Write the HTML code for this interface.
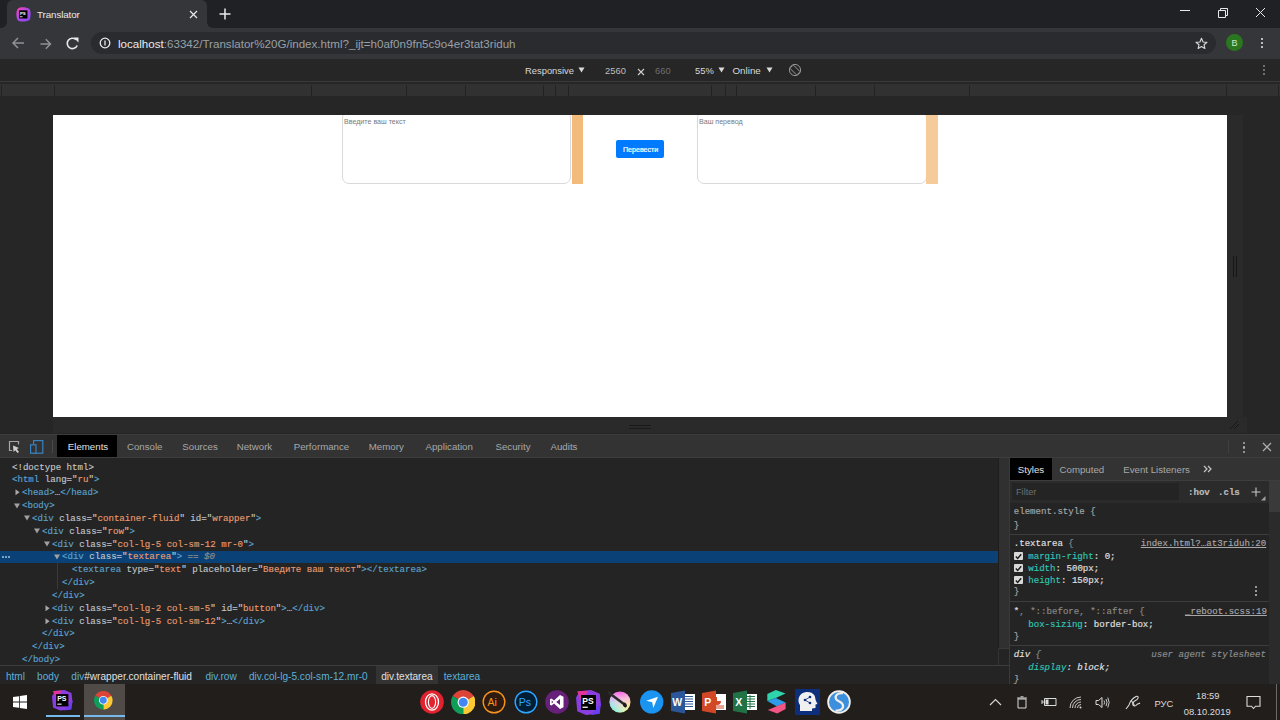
<!DOCTYPE html>
<html><head><meta charset="utf-8">
<style>
*{margin:0;padding:0;box-sizing:border-box}
html,body{width:1280px;height:720px;overflow:hidden;background:#262626;font-family:"Liberation Sans",sans-serif}
.a{position:absolute}
.mono{font-family:"Liberation Mono",monospace;-webkit-text-stroke:0.15px}
#tabstrip{left:0;top:0;width:1280px;height:28px;background:#202124}
#toolbar{left:0;top:28px;width:1280px;height:31px;background:#35363a}
#devbar{left:0;top:59px;width:1280px;height:23px;background:#262626;border-bottom:1px solid #3a3a3a}
#mq{left:0;top:84px;width:1280px;height:12px;background:#313131}
#page{left:53px;top:115px;width:1174px;height:302px;background:#fff;overflow:hidden}
#dt{left:0;top:434px;width:1280px;height:251px;background:#242424;border-top:1px solid #3d3d3d}
#taskbar{left:0;top:685px;width:1280px;height:35px;background:#1f1a18}
.t{position:absolute;white-space:pre}
</style></head><body>
<div id="tabstrip" class="a">
 <div class="a" style="left:7px;top:0;width:200px;height:28px;background:#35363a;border-radius:6px 6px 0 0"></div>
 <div class="a" style="left:1px;top:20px;width:6px;height:8px;background:#35363a"></div>
 <div class="a" style="left:-5px;top:14px;width:12px;height:14px;background:#202124;border-radius:0 0 6px 0"></div>
 <div class="a" style="left:207px;top:20px;width:6px;height:8px;background:#35363a"></div>
 <div class="a" style="left:207px;top:14px;width:12px;height:14px;background:#202124;border-radius:0 0 0 6px"></div>
 <svg class="a" style="left:16px;top:6.5px" width="15" height="15" viewBox="0 0 15 15"><defs><linearGradient id="fg" x1="0" y1="0" x2="1" y2="1"><stop offset="0" stop-color="#ff3fa4"/><stop offset="0.45" stop-color="#b446e8"/><stop offset="1" stop-color="#7b4cf0"/></linearGradient></defs><path d="M4 0.5C7 0 11 0.3 13.5 2C15 4 14.8 10 13.8 12.5C12 14.6 7 14.8 3.5 14.3C1 13.5 0.3 10 0.4 6.5C0.5 3 1.5 1 4 0.5Z" fill="url(#fg)"/><rect x="3.2" y="3.3" width="8.2" height="8.2" fill="#000"/><text x="3.9" y="7.6" font-size="4.4" font-weight="bold" fill="#fff" font-family="Liberation Sans">PS</text><rect x="4" y="9.4" width="2.6" height="0.8" fill="#fff"/></svg>
 <div class="t" style="left:37px;top:9px;font-size:9.8px;color:#e8eaed;letter-spacing:-0.1px">Translator</div>
 <svg class="a" style="left:189px;top:10px" width="9" height="9" viewBox="0 0 9 9"><path d="M1 1L8 8M8 1L1 8" stroke="#e8eaed" stroke-width="1.2"/></svg>
 <svg class="a" style="left:219px;top:8px" width="12" height="12" viewBox="0 0 12 12"><path d="M6 0.5V11.5M0.5 6H11.5" stroke="#e8eaed" stroke-width="1.5"/></svg>
 <svg class="a" style="left:1179px;top:9px" width="12" height="4" viewBox="0 0 12 4"><path d="M1 1.5H11" stroke="#e8eaed" stroke-width="1"/></svg>
 <svg class="a" style="left:1217px;top:7px" width="12" height="12" viewBox="0 0 12 12"><path d="M1.5 3.5H8.5V10.5H1.5Z" fill="none" stroke="#e8eaed" stroke-width="1"/><path d="M3.5 3.5V1.5H10.5V8.5H8.5" fill="none" stroke="#e8eaed" stroke-width="1"/></svg>
 <svg class="a" style="left:1255px;top:7px" width="11" height="11" viewBox="0 0 11 11"><path d="M1 1L10 10M10 1L1 10" stroke="#e8eaed" stroke-width="1"/></svg>
</div>
<div id="toolbar" class="a">
 <svg class="a" style="left:11px;top:8px" width="14" height="14" viewBox="0 0 14 14"><path d="M13 7H2M7 2L2 7L7 12" fill="none" stroke="#8e9196" stroke-width="1.5"/></svg>
 <svg class="a" style="left:38.5px;top:8.5px" width="14" height="14" viewBox="0 0 14 14"><path d="M1.5 7H11.5M6.8 2.3L11.5 7L6.8 11.7" fill="none" stroke="#8e9196" stroke-width="1.5"/></svg>
 <svg class="a" style="left:64.5px;top:8px" width="15" height="15" viewBox="0 0 15 15"><path d="M12.2 9.5A5.2 5.2 0 1 1 11 3.6" fill="none" stroke="#e8eaed" stroke-width="1.6"/><path d="M8.5 1.5H13.5V6.5Z" fill="#e8eaed"/></svg>
 <div class="a" style="left:90.5px;top:3.6px;width:1125.5px;height:22.6px;background:#292b2e;border-radius:11px"></div>
 <svg class="a" style="left:98.8px;top:8.8px" width="12" height="12" viewBox="0 0 12 12"><circle cx="6" cy="6" r="4.8" fill="none" stroke="#e8eaed" stroke-width="1.3"/><path d="M6 3.5V8.5" stroke="#e8eaed" stroke-width="1.3"/></svg>
 <div class="t" style="left:118px;top:9px;font-size:11.6px;color:#9aa0a6"><span style="color:#e8eaed">localhost</span>:63342/Translator%20G/index.html?_ijt=h0af0n9fn5c9o4er3tat3riduh</div>
 <svg class="a" style="left:1195px;top:8.5px" width="13" height="13" viewBox="0 0 15 14"><path d="M7.5 1L9.3 5.2L13.8 5.5L10.4 8.4L11.4 12.8L7.5 10.5L3.6 12.8L4.6 8.4L1.2 5.5L5.7 5.2Z" fill="none" stroke="#d8d8d8" stroke-width="1.3" stroke-linejoin="round"/></svg>
 <div class="a" style="left:1226px;top:6px;width:17px;height:17px;background:#2b7620;border-radius:50%"></div>
 <div class="t" style="left:1230.5px;top:9.5px;font-size:9px;color:#cfe8c8;width:8px;text-align:center">B</div>
 <div class="a" style="left:1260.5px;top:9.5px;width:2.6px;height:2.6px;background:#e8eaed;border-radius:50%"></div>
 <div class="a" style="left:1260.5px;top:13.7px;width:2.6px;height:2.6px;background:#e8eaed;border-radius:50%"></div>
 <div class="a" style="left:1260.5px;top:17.9px;width:2.6px;height:2.6px;background:#e8eaed;border-radius:50%"></div>
</div>
<div id="devbar" class="a">
 <div class="t" style="left:525px;top:5.5px;font-size:9.4px;color:#d9d9d9">Responsive</div>
 <svg class="a" style="left:578px;top:8px" width="7" height="6" viewBox="0 0 7 6"><path d="M0.5 0.5H6.5L3.5 5.5Z" fill="#d9d9d9"/></svg>
 <div class="t" style="left:605px;top:5.5px;font-size:9.4px;color:#bdbdbd">2560</div>
 <svg class="a" style="left:637px;top:9px" width="8" height="8" viewBox="0 0 8 8"><path d="M1 1L7 7M7 1L1 7" stroke="#cfcfcf" stroke-width="1.1"/></svg>
 <div class="t" style="left:655px;top:5.5px;font-size:9.4px;color:#6e6e6e">660</div>
 <div class="t" style="left:695px;top:5.5px;font-size:9.4px;color:#d9d9d9">55%</div>
 <svg class="a" style="left:718px;top:8px" width="7" height="6" viewBox="0 0 7 6"><path d="M0.5 0.5H6.5L3.5 5.5Z" fill="#d9d9d9"/></svg>
 <div class="t" style="left:732.5px;top:5.5px;font-size:9.8px;color:#d9d9d9">Online</div>
 <svg class="a" style="left:765.5px;top:8px" width="7" height="6" viewBox="0 0 7 6"><path d="M0.5 0.5H6.5L3.5 5.5Z" fill="#d9d9d9"/></svg>
 <svg class="a" style="left:788px;top:4px" width="14" height="14" viewBox="0 0 14 14"><circle cx="7" cy="7" r="5.6" fill="none" stroke="#a0a0a0" stroke-width="0.9"/><rect x="4.6" y="2.2" width="4.8" height="9.6" rx="0.6" transform="rotate(-45 7 7)" fill="#262626" stroke="#a0a0a0" stroke-width="0.9"/></svg>
 <div class="a" style="left:1263px;top:6px;width:2px;height:2px;background:#8a8a8a;border-radius:50%"></div>
 <div class="a" style="left:1263px;top:10px;width:2px;height:2px;background:#8a8a8a;border-radius:50%"></div>
 <div class="a" style="left:1263px;top:14px;width:2px;height:2px;background:#8a8a8a;border-radius:50%"></div>
</div>
<div id="mq" class="a"><div class="a" style="left:1.0px;top:1px;width:1px;height:11px;background:#222"></div><div class="a" style="left:53.5px;top:1px;width:1px;height:11px;background:#222"></div><div class="a" style="left:310.5px;top:1px;width:1px;height:11px;background:#222"></div><div class="a" style="left:405.5px;top:1px;width:1px;height:11px;background:#222"></div><div class="a" style="left:464.5px;top:1px;width:1px;height:11px;background:#222"></div><div class="a" style="left:543.0px;top:1px;width:1px;height:11px;background:#222"></div><div class="a" style="left:554.5px;top:1px;width:1px;height:11px;background:#222"></div><div class="a" style="left:568.0px;top:1px;width:1px;height:11px;background:#222"></div><div class="a" style="left:711.0px;top:1px;width:1px;height:11px;background:#222"></div><div class="a" style="left:724.5px;top:1px;width:1px;height:11px;background:#222"></div><div class="a" style="left:736.0px;top:1px;width:1px;height:11px;background:#222"></div><div class="a" style="left:814.5px;top:1px;width:1px;height:11px;background:#222"></div><div class="a" style="left:873.5px;top:1px;width:1px;height:11px;background:#222"></div><div class="a" style="left:968.5px;top:1px;width:1px;height:11px;background:#222"></div><div class="a" style="left:1225.5px;top:1px;width:1px;height:11px;background:#222"></div><div class="a" style="left:1278.0px;top:1px;width:1px;height:11px;background:#222"></div></div>
<div class="a" style="left:1227px;top:115px;width:16px;height:302px;background:#2a2a2a"></div>
<div class="a" style="left:1233px;top:256px;width:1px;height:21px;background:#161616"></div>
<div class="a" style="left:1236px;top:256px;width:1px;height:21px;background:#161616"></div>
<div class="a" style="left:53px;top:417px;width:1194px;height:16px;background:#2a2a2a"></div>
<div class="a" style="left:629px;top:425px;width:22px;height:1px;background:#1a1a1a"></div>
<div class="a" style="left:629px;top:428px;width:22px;height:1px;background:#1a1a1a"></div>
<svg class="a" style="left:1228px;top:418px" width="14" height="14" viewBox="0 0 14 14"><path d="M2 11L10 3M6 11L11 6" stroke="#151515" stroke-width="1"/></svg>
<div id="page" class="a">
 <div class="a" style="left:289px;top:-4px;width:229px;height:72.5px;border:1px solid #d9d9d9;border-radius:7px"></div>
 <div class="t" style="left:291px;top:3px;font-size:7.1px;color:#7a7a7a">Введите ваш текст</div>
 <div class="a" style="left:519px;top:0;width:11px;height:68.5px;background:#f2bb7b"></div>
 <div class="a" style="left:563px;top:25px;width:47.6px;height:17.5px;background:#007bff;border-radius:2px"></div>
 <div class="t" style="left:570px;top:30.6px;font-size:7.1px;color:#fff;-webkit-text-stroke:0.2px #fff">Перевести</div>
 <div class="a" style="left:644px;top:-4px;width:229.5px;height:72.5px;border:1px solid #d9d9d9;border-radius:7px"></div>
 <div class="t" style="left:646px;top:3px;font-size:7.1px;color:#7a7a7a">Ваш перевод</div>
 <div class="a" style="left:873px;top:0;width:11.5px;height:68.5px;background:#f4cb99"></div>
</div>
<!--DT-->
<div class="a" style="left:0;top:433px;width:1280px;height:252px;background:#242424"></div>
<div class="a" style="left:0;top:434px;width:1280px;height:1px;background:#3d3d3d"></div>
<div class="a" style="left:0;top:435px;width:1280px;height:22px;background:#333333"></div>
<div class="a" style="left:0;top:457px;width:1280px;height:1px;background:#3d3d3d"></div>
<svg class="a" style="left:7px;top:440px" width="14" height="14" viewBox="0 0 14 14"><path d="M5 10.5H2.5V1.5H11.5V4.5" fill="none" stroke="#a5a5a5" stroke-width="1.2"/><path d="M6 5.5L6.5 12L8.2 10.2L10.5 13L12 12L9.8 9L12 8Z" fill="#cfcfcf"/></svg>
<svg class="a" style="left:29px;top:439px" width="16" height="16" viewBox="0 0 16 16"><rect x="4.6" y="1.6" width="9.2" height="12.6" fill="none" stroke="#3a88cc" stroke-width="1.1"/><rect x="1.6" y="5.8" width="5.4" height="8.4" fill="#333" stroke="#3a88cc" stroke-width="1.1"/></svg>
<div class="a" style="left:52px;top:440px;width:1px;height:13px;background:#4a4a4a"></div>
<div class="a" style="left:57px;top:435px;width:60px;height:22px;background:#000"></div>
<div class="t" style="left:67.8px;top:441px;font-size:9.7px;color:#e0e0e0">Elements</div>
<div class="t" style="left:126.9px;top:441px;font-size:9.7px;color:#a8a8a8">Console</div>
<div class="t" style="left:182.3px;top:441px;font-size:9.7px;color:#a8a8a8">Sources</div>
<div class="t" style="left:236.7px;top:441px;font-size:9.7px;color:#a8a8a8">Network</div>
<div class="t" style="left:293.75px;top:441px;font-size:9.7px;color:#a8a8a8">Performance</div>
<div class="t" style="left:368.75px;top:441px;font-size:9.7px;color:#a8a8a8">Memory</div>
<div class="t" style="left:425.5px;top:441px;font-size:9.7px;color:#a8a8a8">Application</div>
<div class="t" style="left:495.5px;top:441px;font-size:9.7px;color:#a8a8a8">Security</div>
<div class="t" style="left:550.5px;top:441px;font-size:9.7px;color:#a8a8a8">Audits</div>
<div class="a" style="left:1228px;top:440px;width:1px;height:13px;background:#3f3f3f"></div>
<div class="a" style="left:1243px;top:442.2px;width:2.2px;height:2.2px;background:#b0b0b0;border-radius:50%"></div>
<div class="a" style="left:1243px;top:446.4px;width:2.2px;height:2.2px;background:#b0b0b0;border-radius:50%"></div>
<div class="a" style="left:1243px;top:450.6px;width:2.2px;height:2.2px;background:#b0b0b0;border-radius:50%"></div>
<svg class="a" style="left:1262px;top:442px" width="10" height="10" viewBox="0 0 10 10"><path d="M1 1L9 9M9 1L1 9" stroke="#b0b0b0" stroke-width="1.2"/></svg>
<div class="a" style="left:998px;top:458px;width:12px;height:207px;border-left:1px solid #333;border-right:1px solid #3a3a3a"></div>
<div class="a" style="left:998px;top:458px;width:12px;height:191px;background:#303030;border-left:1px solid #1e1e1e;border-right:1px solid #3a3a3a;border-bottom:1px solid #3a3a3a"></div>
<div class="a" style="left:1009px;top:458px;width:1px;height:227px;background:#3a3a3a"></div>
<div class="a" style="left:1010px;top:458px;width:270px;height:22px;background:#333333"></div>
<div class="a" style="left:1010px;top:480px;width:270px;height:1px;background:#3d3d3d"></div>
<div class="a" style="left:1010px;top:458px;width:42px;height:22px;background:#000"></div>
<div class="t" style="left:1017.8px;top:464px;font-size:9.7px;color:#e0e0e0">Styles</div>
<div class="t" style="left:1059.5px;top:464px;font-size:9.7px;color:#a8a8a8">Computed</div>
<div class="t" style="left:1123.2px;top:464px;font-size:9.7px;color:#a8a8a8">Event Listeners</div>
<svg class="a" style="left:1203px;top:465px" width="10" height="8" viewBox="0 0 10 8"><path d="M1 1L4 4L1 7M5 1L8 4L5 7" fill="none" stroke="#c8c8c8" stroke-width="1.2"/></svg>
<div class="a" style="left:1010px;top:481px;width:259px;height:22px;background:#2b2b2b"></div>
<div class="a" style="left:1012px;top:483px;width:166.5px;height:17px;background:#242424"></div>
<div class="t" style="left:1016px;top:487px;font-size:9.2px;color:#6f6f6f">Filter</div>
<div class="t mono" style="left:1188px;top:486.5px;font-size:9.1px;font-weight:bold;color:#bdbdbd">:hov</div>
<div class="t mono" style="left:1218px;top:486.5px;font-size:9.1px;font-weight:bold;color:#bdbdbd">.cls</div>
<svg class="a" style="left:1251px;top:487px" width="10" height="10" viewBox="0 0 10 10"><path d="M5 0.5V9.5M0.5 5H9.5" stroke="#c8c8c8" stroke-width="1.1"/></svg>
<svg class="a" style="left:1261px;top:496px" width="4.5" height="4.5" viewBox="0 0 5 5"><path d="M5 0V5H0Z" fill="#a0a0a0"/></svg>
<div class="a" style="left:1269px;top:481px;width:11px;height:204px;background:#2b2b2b"></div>
<div class="a" style="left:1269px;top:481px;width:11px;height:31px;background:#3a3a3a"></div>
<div class="t mono" style="left:1013.75px;top:506.25px;font-size:9.1px;line-height:12px;"><span style="color:#a8a8a8">element.style {</span></div>
<div class="t mono" style="left:1013.75px;top:520.00px;font-size:9.1px;line-height:12px;"><span style="color:#a8a8a8">}</span></div>
<div class="a" style="left:1010px;top:534px;width:259px;height:1px;background:#3d3d3d"></div>
<div class="t mono" style="left:1013.75px;top:537.50px;font-size:9.1px;line-height:12px;"><span style="color:#e0e0e0">.textarea</span><span style="color:#8a8a8a"> {</span></div>
<div class="t mono" style="left:1140.75px;top:537.50px;font-size:9.1px;line-height:12px;"><span style="color:#a8a8a8;text-decoration:underline">index.html?…at3riduh:20</span></div>
<div class="a" style="left:1014px;top:551.5px;width:8.5px;height:8.5px;background:#d8d8d8;border-radius:1px"></div>
<svg class="a" style="left:1014px;top:551.5px" width="9" height="9" viewBox="0 0 9 9"><path d="M1.8 4.5L3.7 6.5L7.2 2.2" fill="none" stroke="#1a1a1a" stroke-width="1.4"/></svg>
<div class="t mono" style="left:1028.25px;top:551.00px;font-size:9.1px;line-height:12px;"><span style="color:#30c7b6">margin-right</span><span style="color:#e0e0e0">: 0;</span></div>
<div class="a" style="left:1014px;top:563.5px;width:8.5px;height:8.5px;background:#d8d8d8;border-radius:1px"></div>
<svg class="a" style="left:1014px;top:563.5px" width="9" height="9" viewBox="0 0 9 9"><path d="M1.8 4.5L3.7 6.5L7.2 2.2" fill="none" stroke="#1a1a1a" stroke-width="1.4"/></svg>
<div class="t mono" style="left:1028.25px;top:563.00px;font-size:9.1px;line-height:12px;"><span style="color:#30c7b6">width</span><span style="color:#e0e0e0">: 500px;</span></div>
<div class="a" style="left:1014px;top:575.5px;width:8.5px;height:8.5px;background:#d8d8d8;border-radius:1px"></div>
<svg class="a" style="left:1014px;top:575.5px" width="9" height="9" viewBox="0 0 9 9"><path d="M1.8 4.5L3.7 6.5L7.2 2.2" fill="none" stroke="#1a1a1a" stroke-width="1.4"/></svg>
<div class="t mono" style="left:1028.25px;top:575.00px;font-size:9.1px;line-height:12px;"><span style="color:#30c7b6">height</span><span style="color:#e0e0e0">: 150px;</span></div>
<div class="t mono" style="left:1013.75px;top:586.25px;font-size:9.1px;line-height:12px;"><span style="color:#a8a8a8">}</span></div>
<div class="a" style="left:1255px;top:586px;width:2px;height:2px;background:#c0c0c0;border-radius:50%"></div>
<div class="a" style="left:1255px;top:590px;width:2px;height:2px;background:#c0c0c0;border-radius:50%"></div>
<div class="a" style="left:1255px;top:594px;width:2px;height:2px;background:#c0c0c0;border-radius:50%"></div>
<div class="a" style="left:1010px;top:601px;width:259px;height:1px;background:#3d3d3d"></div>
<div class="t mono" style="left:1013.75px;top:605.50px;font-size:9.1px;line-height:12px;"><span style="color:#e0e0e0">*</span><span style="color:#8a8a8a">, *::before, *::after</span><span style="color:#8a8a8a"> {</span></div>
<div class="t mono" style="left:1185px;top:605.50px;font-size:9.1px;line-height:12px;"><span style="color:#a8a8a8;text-decoration:underline">_reboot.scss:19</span></div>
<div class="t mono" style="left:1028.25px;top:618.75px;font-size:9.1px;line-height:12px;"><span style="color:#30c7b6">box-sizing</span><span style="color:#e0e0e0">: border-box;</span></div>
<div class="t mono" style="left:1013.75px;top:631.25px;font-size:9.1px;line-height:12px;"><span style="color:#a8a8a8">}</span></div>
<div class="a" style="left:1010px;top:645px;width:259px;height:1px;background:#3d3d3d"></div>
<div class="t mono" style="left:1013.75px;top:648.75px;font-size:9.1px;line-height:12px;font-style:italic"><span style="color:#e0e0e0">div</span><span style="color:#8a8a8a"> {</span></div>
<div class="t mono" style="left:1151.25px;top:648.75px;font-size:9.1px;line-height:12px;font-style:italic"><span style="color:#8f8f8f">user agent stylesheet</span></div>
<div class="t mono" style="left:1028.25px;top:662.00px;font-size:9.1px;line-height:12px;font-style:italic"><span style="color:#30c7b6">display</span><span style="color:#e0e0e0">: block;</span></div>
<div class="t mono" style="left:1013.75px;top:673.75px;font-size:9.1px;line-height:12px;font-style:italic"><span style="color:#a8a8a8">}</span></div>
<div class="a" style="left:0;top:665px;width:1010px;height:1px;background:#3d3d3d"></div>
<div class="a" style="left:375.5px;top:666px;width:62px;height:17.5px;background:#333333"></div>
<div class="t" style="left:5.9px;top:670.5px;font-size:10.1px"><span style="color:#5db0d7">html</span></div>
<div class="t" style="left:37.1px;top:670.5px;font-size:10.1px"><span style="color:#5db0d7">body</span></div>
<div class="t" style="left:71.3px;top:670.5px;font-size:10.1px"><span style="color:#5db0d7">div</span><span style="color:#e0e0e0">#wrapper.container-fluid</span></div>
<div class="t" style="left:205.5px;top:670.5px;font-size:10.1px"><span style="color:#5db0d7">div.row</span></div>
<div class="t" style="left:249px;top:670.5px;font-size:10.1px"><span style="color:#5db0d7">div.col-lg-5.col-sm-12.mr-0</span></div>
<div class="t" style="left:381.25px;top:670.5px;font-size:10.1px"><span style="color:#e0e0e0">div.textarea</span></div>
<div class="t" style="left:443.75px;top:670.5px;font-size:10.1px"><span style="color:#5db0d7">textarea</span></div>
<div class="t mono" style="left:12px;top:461.60px;font-size:9.1px;line-height:12px"><span style="color:#c4c4c4">&lt;!doctype html&gt;</span></div>
<div class="t mono" style="left:12px;top:474.43px;font-size:9.1px;line-height:12px"><span style="color:#5ba2cc">&lt;html</span> <span style="color:#c0c5ca">lang</span><span style="color:#c0c5ca">=&quot;</span><span style="color:#e89a6e">ru</span><span style="color:#c0c5ca">&quot;</span><span style="color:#5ba2cc">&gt;</span></div>
<svg class="a" style="left:14.5px;top:489.26px" width="5" height="6.5" viewBox="0 0 5 6.5"><path d="M0.5 0.2V6.3L4.6 3.25Z" fill="#a8a8a8"/></svg>
<div class="t mono" style="left:22px;top:487.26px;font-size:9.1px;line-height:12px"><span style="color:#5ba2cc">&lt;head&gt;</span><span style="color:#c4c4c4">…</span><span style="color:#5ba2cc">&lt;/head&gt;</span></div>
<svg class="a" style="left:14px;top:502.59px" width="6" height="6" viewBox="0 0 6 6"><path d="M0 0.5H6L3 5.5Z" fill="#a0a0a0"/></svg>
<div class="t mono" style="left:22px;top:500.09px;font-size:9.1px;line-height:12px"><span style="color:#5ba2cc">&lt;body&gt;</span></div>
<svg class="a" style="left:24px;top:515.42px" width="6" height="6" viewBox="0 0 6 6"><path d="M0 0.5H6L3 5.5Z" fill="#a0a0a0"/></svg>
<div class="t mono" style="left:32px;top:512.92px;font-size:9.1px;line-height:12px"><span style="color:#5ba2cc">&lt;div</span> <span style="color:#c0c5ca">class</span><span style="color:#c0c5ca">=&quot;</span><span style="color:#e89a6e">container-fluid</span><span style="color:#c0c5ca">&quot;</span> <span style="color:#c0c5ca">id</span><span style="color:#c0c5ca">=&quot;</span><span style="color:#e89a6e">wrapper</span><span style="color:#c0c5ca">&quot;</span><span style="color:#5ba2cc">&gt;</span></div>
<svg class="a" style="left:34px;top:528.25px" width="6" height="6" viewBox="0 0 6 6"><path d="M0 0.5H6L3 5.5Z" fill="#a0a0a0"/></svg>
<div class="t mono" style="left:42px;top:525.75px;font-size:9.1px;line-height:12px"><span style="color:#5ba2cc">&lt;div</span> <span style="color:#c0c5ca">class</span><span style="color:#c0c5ca">=&quot;</span><span style="color:#e89a6e">row</span><span style="color:#c0c5ca">&quot;</span><span style="color:#5ba2cc">&gt;</span></div>
<svg class="a" style="left:44px;top:541.08px" width="6" height="6" viewBox="0 0 6 6"><path d="M0 0.5H6L3 5.5Z" fill="#a0a0a0"/></svg>
<div class="t mono" style="left:52px;top:538.58px;font-size:9.1px;line-height:12px"><span style="color:#5ba2cc">&lt;div</span> <span style="color:#c0c5ca">class</span><span style="color:#c0c5ca">=&quot;</span><span style="color:#e89a6e">col-lg-5 col-sm-12 mr-0</span><span style="color:#c0c5ca">&quot;</span><span style="color:#5ba2cc">&gt;</span></div>
<div class="a" style="left:0;top:550.5px;width:998px;height:12px;background:#0a4277"></div>
<div class="a" style="left:2px;top:555.5px;width:2px;height:2px;background:#9fc3e3;border-radius:50%"></div>
<div class="a" style="left:5px;top:555.5px;width:2px;height:2px;background:#9fc3e3;border-radius:50%"></div>
<div class="a" style="left:8px;top:555.5px;width:2px;height:2px;background:#9fc3e3;border-radius:50%"></div>
<svg class="a" style="left:54px;top:553.91px" width="6" height="6" viewBox="0 0 6 6"><path d="M0 0.5H6L3 5.5Z" fill="#a0a0a0"/></svg>
<div class="t mono" style="left:62px;top:551.41px;font-size:9.1px;line-height:12px"><span style="color:#5ba2cc">&lt;div</span> <span style="color:#c0c5ca">class</span><span style="color:#c0c5ca">=&quot;</span><span style="color:#e89a6e">textarea</span><span style="color:#c0c5ca">&quot;</span><span style="color:#5ba2cc">&gt;</span><span style="color:#8f8f8f"> == </span><span style="color:#8f8f8f;font-style:italic">$0</span></div>
<div class="t mono" style="left:72px;top:564.24px;font-size:9.1px;line-height:12px"><span style="color:#5ba2cc">&lt;textarea</span> <span style="color:#c0c5ca">type</span><span style="color:#c0c5ca">=&quot;</span><span style="color:#e89a6e">text</span><span style="color:#c0c5ca">&quot;</span> <span style="color:#c0c5ca">placeholder</span><span style="color:#c0c5ca">=&quot;</span><span style="color:#e89a6e">Введите ваш текст</span><span style="color:#c0c5ca">&quot;</span><span style="color:#5ba2cc">&gt;</span><span style="color:#5ba2cc">&lt;/textarea&gt;</span></div>
<div class="t mono" style="left:62px;top:577.07px;font-size:9.1px;line-height:12px"><span style="color:#5ba2cc">&lt;/div&gt;</span></div>
<div class="t mono" style="left:52px;top:589.90px;font-size:9.1px;line-height:12px"><span style="color:#5ba2cc">&lt;/div&gt;</span></div>
<svg class="a" style="left:44.5px;top:604.73px" width="5" height="6.5" viewBox="0 0 5 6.5"><path d="M0.5 0.2V6.3L4.6 3.25Z" fill="#a8a8a8"/></svg>
<div class="t mono" style="left:52px;top:602.73px;font-size:9.1px;line-height:12px"><span style="color:#5ba2cc">&lt;div</span> <span style="color:#c0c5ca">class</span><span style="color:#c0c5ca">=&quot;</span><span style="color:#e89a6e">col-lg-2 col-sm-5</span><span style="color:#c0c5ca">&quot;</span> <span style="color:#c0c5ca">id</span><span style="color:#c0c5ca">=&quot;</span><span style="color:#e89a6e">button</span><span style="color:#c0c5ca">&quot;</span><span style="color:#5ba2cc">&gt;</span><span style="color:#c4c4c4">…</span><span style="color:#5ba2cc">&lt;/div&gt;</span></div>
<svg class="a" style="left:44.5px;top:617.56px" width="5" height="6.5" viewBox="0 0 5 6.5"><path d="M0.5 0.2V6.3L4.6 3.25Z" fill="#a8a8a8"/></svg>
<div class="t mono" style="left:52px;top:615.56px;font-size:9.1px;line-height:12px"><span style="color:#5ba2cc">&lt;div</span> <span style="color:#c0c5ca">class</span><span style="color:#c0c5ca">=&quot;</span><span style="color:#e89a6e">col-lg-5 col-sm-12</span><span style="color:#c0c5ca">&quot;</span><span style="color:#5ba2cc">&gt;</span><span style="color:#c4c4c4">…</span><span style="color:#5ba2cc">&lt;/div&gt;</span></div>
<div class="t mono" style="left:42px;top:628.39px;font-size:9.1px;line-height:12px"><span style="color:#5ba2cc">&lt;/div&gt;</span></div>
<div class="t mono" style="left:32px;top:641.22px;font-size:9.1px;line-height:12px"><span style="color:#5ba2cc">&lt;/div&gt;</span></div>
<div class="t mono" style="left:22px;top:654.05px;font-size:9.1px;line-height:12px"><span style="color:#5ba2cc">&lt;/body&gt;</span></div>
<div class="a" style="left:57px;top:563px;width:1px;height:26px;background:#3a3a3a"></div>
<!--/DT-->
<!--TB-->
<div class="a" style="left:0;top:684px;width:1280px;height:36px;background:#211e1c"></div>
<div class="a" style="left:1276px;top:684px;width:1px;height:36px;background:#6a6a6a"></div>
<svg class="a" style="left:13px;top:695px" width="14" height="14" viewBox="0 0 14 14"><path d="M0 2L6 1.2V6.6H0ZM6.8 1.1L14 0V6.6H6.8ZM0 7.4H6V12.8L0 12ZM6.8 7.4H14V14L6.8 12.9Z" fill="#fff"/></svg>
<svg class="a" style="left:52px;top:690px" width="20.5" height="20.5" viewBox="0 0 20 20"><path d="M3 1L12 0L19 3L20 12L17 19L8 20L1 17L0 6Z" fill="#8a3ee0"/><path d="M1 1L10 0.5L4 9Z" fill="#e3339a"/><path d="M20 10L19 19L12 20Z" fill="#6a3ff0"/><rect x="4" y="4" width="12" height="12" fill="#000"/><text x="5" y="11" font-size="6.8" font-weight="bold" fill="#fff" font-family="Liberation Sans">PS</text><rect x="5.2" y="13.3" width="4.2" height="1" fill="#fff"/></svg>
<div class="a" style="left:46px;top:715px;width:34px;height:2px;background:#76b9ed"></div>
<div class="a" style="left:84px;top:684px;width:40.5px;height:36px;background:#514b48"></div>
<div class="a" style="left:84px;top:715px;width:40.5px;height:2px;background:#76b9ed"></div>
<svg class="a" style="left:94.2px;top:691.2px" width="18.6" height="18.6" viewBox="-10 -10 20 20"><path d="M0 0L-8.66 -5A10 10 0 0 1 8.66 -5Z" fill="#db4437"/><path d="M0 0L8.66 -5A10 10 0 0 1 0 10Z" fill="#fcc934"/><path d="M0 0L0 10A10 10 0 0 1 -8.66 -5Z" fill="#0f9d58"/><circle r="4.6" fill="#fff"/><circle r="3.7" fill="#4285f4"/></svg>
<svg class="a" style="left:420px;top:690px" width="24" height="24" viewBox="0 0 24 24"><circle cx="12" cy="12" r="11.8" fill="#e0232e"/><ellipse cx="12" cy="12" rx="6.5" ry="8.2" fill="none" stroke="#fff" stroke-width="1.3"/><ellipse cx="12" cy="12" rx="3.6" ry="6.4" fill="none" stroke="#fff" stroke-width="1.1"/></svg>
<svg class="a" style="left:450.90000000000003px;top:689.8px" width="24.4" height="24.4" viewBox="-10 -10 20 20"><path d="M0 0L-8.66 -5A10 10 0 0 1 8.66 -5Z" fill="#db4437"/><path d="M0 0L8.66 -5A10 10 0 0 1 0 10Z" fill="#fcc934"/><path d="M0 0L0 10A10 10 0 0 1 -8.66 -5Z" fill="#0f9d58"/><circle r="4.6" fill="#fff"/><circle r="3.7" fill="#4285f4"/></svg>
<svg class="a" style="left:482.4px;top:690px" width="24" height="24" viewBox="0 0 24 24"><circle cx="12" cy="12" r="11.8" fill="#2e1b0f"/><circle cx="12" cy="12" r="10.8" fill="none" stroke="#f7931e" stroke-width="1.4"/><text x="5.6" y="16.2" font-size="10.5" font-family="Liberation Sans" fill="#f7931e">Ai</text></svg>
<svg class="a" style="left:514.3px;top:690px" width="24" height="24" viewBox="0 0 24 24"><circle cx="12" cy="12" r="11.8" fill="#001e36"/><circle cx="12" cy="12" r="10.8" fill="none" stroke="#31a8ff" stroke-width="1.4"/><text x="4.8" y="16.2" font-size="10.5" font-family="Liberation Sans" fill="#31a8ff">Ps</text></svg>
<svg class="a" style="left:545.3px;top:690px" width="24" height="24" viewBox="0 0 24 24"><circle cx="12" cy="12" r="11.8" fill="#68217a"/><path d="M15 5L18.5 6.8V17.2L15 19L9 13.5L6.5 15.5L5 14.7V9.3L6.5 8.5L9 10.5ZM15 9L11.2 12L15 15Z M6.7 10.5V13.5L8.2 12Z" fill="#fff" fill-rule="evenodd"/></svg>
<svg class="a" style="left:575.7px;top:689.5px" width="25" height="25" viewBox="0 0 20 20"><path d="M3 1L12 0L19 3L20 12L17 19L8 20L1 17L0 6Z" fill="#8a3ee0"/><path d="M1 1L10 0.5L4 9Z" fill="#e3339a"/><path d="M20 10L19 19L12 20Z" fill="#6a3ff0"/><rect x="4" y="4" width="12" height="12" fill="#000"/><text x="5" y="11" font-size="6.8" font-weight="bold" fill="#fff" font-family="Liberation Sans">PS</text><rect x="5.2" y="13.3" width="4.2" height="1" fill="#fff"/></svg>
<svg class="a" style="left:608px;top:690px" width="24" height="24" viewBox="0 0 24 24"><defs><linearGradient id="kg1" x1="0.2" y1="0" x2="0.6" y2="1"><stop offset="0" stop-color="#ff4ff0"/><stop offset="0.5" stop-color="#f7c0d8"/><stop offset="1" stop-color="#fff27a"/></linearGradient><linearGradient id="kg2" x1="1" y1="0" x2="0" y2="1"><stop offset="0.3" stop-color="#ffffff" stop-opacity="0"/><stop offset="1" stop-color="#3ef0f0"/></linearGradient></defs><circle cx="12" cy="12" r="10.5" fill="url(#kg1)"/><circle cx="12" cy="12" r="10.5" fill="url(#kg2)"/><path d="M0.5 2.5L14.5 13" stroke="#2b2b2b" stroke-width="2.6" stroke-linecap="round"/><ellipse cx="16.8" cy="15" rx="1.9" ry="2.6" transform="rotate(-35 16.8 15)" fill="#1c1c1c"/></svg>
<svg class="a" style="left:639.5px;top:690px" width="24" height="24" viewBox="0 0 24 24"><circle cx="11.7" cy="11.9" r="11.7" fill="#1a94f0"/><path d="M6.3 10.7L18 6.8L13.3 18.1L12.2 12.3Z" fill="#fff"/></svg>
<svg class="a" style="left:670.5px;top:690px" width="25" height="24" viewBox="0 0 25 24"><rect x="10" y="4" width="14" height="16" fill="#fff"/><path d="M12 6.5H22M12 9H22M12 11.5H22M12 14H22M12 16.5H22" stroke="#2b579a" stroke-width="1"/><path d="M0 3L14 0.5V23.5L0 21Z" fill="#2b579a"/><text x="1.2" y="16" font-size="10.5" font-weight="bold" font-family="Liberation Sans" fill="#fff">W</text></svg>
<svg class="a" style="left:702px;top:690px" width="25" height="24" viewBox="0 0 25 24"><rect x="10" y="4" width="14" height="16" fill="#fff"/><path d="M15 7A4 4 0 1 0 19 11H15Z" fill="#d24726"/><path d="M13 16H22M13 18H22" stroke="#d24726" stroke-width="1"/><path d="M0 3L14 0.5V23.5L0 21Z" fill="#d24726"/><text x="2.3" y="16" font-size="10.5" font-weight="bold" font-family="Liberation Sans" fill="#fff">P</text></svg>
<svg class="a" style="left:732.8px;top:690px" width="25" height="24" viewBox="0 0 25 24"><rect x="10" y="4" width="14" height="16" fill="#fff"/><path d="M12 6.5H22M12 9H22M12 11.5H22M12 14H22M12 16.5H22M17 5V19" stroke="#217346" stroke-width="1"/><path d="M0 3L14 0.5V23.5L0 21Z" fill="#217346"/><text x="2.3" y="16" font-size="10.5" font-weight="bold" font-family="Liberation Sans" fill="#fff">X</text></svg>
<svg class="a" style="left:764.3px;top:690px" width="24" height="25" viewBox="0 0 24 25"><path d="M3.3 4.1L11.8 0L21.6 3.6L11.8 8L3.3 11Z" fill="#2dd4ac"/><path d="M3.3 11L11.8 8L21.6 12.5L13 16.5Z" fill="#2e9be8"/><path d="M3.8 20L21.6 12.5V19L13.2 23.5Z" fill="#f25584"/></svg>
<svg class="a" style="left:795.4px;top:689px" width="25" height="26" viewBox="0 0 25 26"><rect x="0" y="0" width="25" height="26" fill="#0d2e7a"/><path d="M5 22V16C2.5 13 3 7 7 4.5C11 2 17 2.5 19.5 6.5C20.5 8.5 20 10 21 12L22.5 15L20.5 15.5V19L17 19.5V22Z" fill="#f0f0f0"/><circle cx="15" cy="8" r="1.3" fill="#0d2e7a"/><circle cx="10" cy="11" r="1.3" fill="#0d2e7a"/><circle cx="15" cy="14" r="1.3" fill="#0d2e7a"/><path d="M15 8L10 11L15 14" stroke="#0d2e7a" stroke-width="0.8" fill="none"/></svg>
<svg class="a" style="left:827.2px;top:690px" width="24" height="24" viewBox="0 0 24 24"><circle cx="12" cy="12" r="11.8" fill="#f2eeea"/><circle cx="12" cy="12" r="10" fill="#3b8fdc"/><path d="M16 3.2C11 2.5 7.5 5.5 9 9C10.5 12 15.5 11.5 16 15.5C16.5 19 13 21 8.5 20.5" fill="none" stroke="#f2eeea" stroke-width="2.2"/></svg>
<svg class="a" style="left:989px;top:698px" width="13" height="8" viewBox="0 0 13 8"><path d="M1 7L6.5 1.5L12 7" fill="none" stroke="#dcdcdc" stroke-width="1.1"/></svg>
<svg class="a" style="left:1016px;top:695.5px" width="12" height="13" viewBox="0 0 12 13"><path d="M2 3H10V12H2Z" fill="none" stroke="#dcdcdc" stroke-width="1"/><path d="M1 2H11M4.5 0.8H7.5" stroke="#dcdcdc" stroke-width="1"/></svg>
<svg class="a" style="left:1041px;top:697px" width="16" height="10" viewBox="0 0 16 10"><path d="M3.5 1.5H15V8.5H3.5Z" fill="none" stroke="#dcdcdc" stroke-width="1"/><path d="M1 3V7M1 5H3.5" stroke="#dcdcdc" stroke-width="1"/><rect x="4.5" y="2.5" width="3" height="5" fill="#dcdcdc"/></svg>
<svg class="a" style="left:1069px;top:695.5px" width="13" height="13" viewBox="0 0 13 13"><path d="M1 12A11 11 0 0 1 12 1M3.5 12A8.5 8.5 0 0 1 12 3.5M6 12A6 6 0 0 1 12 6M8.5 12A3.5 3.5 0 0 1 12 8.5" fill="none" stroke="#dcdcdc" stroke-width="0.9"/><circle cx="11.5" cy="11.5" r="1" fill="#dcdcdc"/></svg>
<svg class="a" style="left:1094.5px;top:695.5px" width="15" height="13" viewBox="0 0 15 13"><path d="M1 4.5H3.5L7 1.5V11.5L3.5 8.5H1Z" fill="none" stroke="#dcdcdc" stroke-width="1"/><path d="M9 4.5Q10.2 6.5 9 8.5M11 3Q13 6.5 11 10M12.8 1.5Q15.5 6.5 12.8 11.5" fill="none" stroke="#dcdcdc" stroke-width="0.9"/></svg>
<svg class="a" style="left:1124.5px;top:694.5px" width="16" height="15" viewBox="0 0 16 15"><path d="M1 14L4 10C5 7 8 3 11 1.5C13 0.8 14 2 12.5 4C11 6 9 5 8 8C7 11 10 12 12 9.5C13 8.5 14 9 15 8" fill="none" stroke="#dcdcdc" stroke-width="1.1"/><path d="M6 5L9.5 10.5" stroke="#dcdcdc" stroke-width="1.1"/></svg>
<div class="t" style="left:1154.5px;top:697.5px;font-size:9.4px;color:#dcdcdc">РУС</div>
<div class="t" style="left:1196px;top:690px;font-size:9.4px;color:#dcdcdc">18:59</div>
<div class="t" style="left:1183.7px;top:705.5px;font-size:9.4px;color:#dcdcdc">08.10.2019</div>
<svg class="a" style="left:1245.5px;top:694.5px" width="15" height="15" viewBox="0 0 15 15"><path d="M1 1.5H14V11.2H9.5L7.5 13.5L5.5 11.2H1Z" fill="none" stroke="#dcdcdc" stroke-width="1.1"/></svg>
<!--/TB-->
</body></html>
